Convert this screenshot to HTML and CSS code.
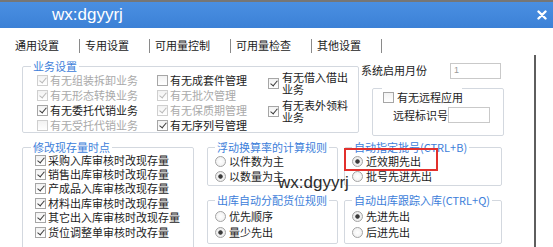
FILE: index.html
```html
<!DOCTYPE html>
<html lang="zh-CN">
<head>
<meta charset="utf-8">
<title>wx:dgyyrj</title>
<link rel="stylesheet" href="styles.css">
</head>
<body>
<div class="window">
  <div class="titlebar">
    <span class="title">wx:dgyyrj</span>
    <svg class="close" width="10" height="10" viewBox="0 0 10 10"><path d="M1.5 1.5 L8.5 8.5 M8.5 1.5 L1.5 8.5" stroke="#fff" stroke-width="2.4" stroke-linecap="round"/></svg>
  </div>
  <div class="tabs">
    <span class="tab first">通用设置</span><span class="sep"></span>
    <span class="tab">专用设置</span><span class="sep"></span>
    <span class="tab">可用量控制</span><span class="sep"></span>
    <span class="tab">可用量检查</span><span class="sep"></span>
    <span class="tab">其他设置</span><span class="sep"></span>
  </div>
  <div class="page">
    <div class="row1">
      <fieldset class="group biz">
        <legend>业务设置</legend>
        <div class="biz-cols">
          <div class="col c1">
            <div class="item dis"><span class="cb dis on"></span>有无组装拆卸业务</div>
            <div class="item dis"><span class="cb dis on"></span>有无形态转换业务</div>
            <div class="item"><span class="cb on"></span>有无委托代销业务</div>
            <div class="item dis"><span class="cb dis"></span>有无受托代销业务</div>
          </div>
          <div class="col c2">
            <div class="item"><span class="cb"></span>有无成套件管理</div>
            <div class="item dis"><span class="cb dis on"></span>有无批次管理</div>
            <div class="item dis"><span class="cb dis on"></span>有无保质期管理</div>
            <div class="item"><span class="cb on"></span>有无序列号管理</div>
          </div>
          <div class="col c3">
            <div class="witem"><span class="cb on"></span><span class="wtext">有无借入借出业务</span></div>
            <div class="witem"><span class="cb on"></span><span class="wtext">有无表外领料业务</span></div>
          </div>
        </div>
      </fieldset>
      <div class="side">
        <div class="month"><span>系统启用月份</span><span class="input month-input">1</span></div>
        <fieldset class="group remote">
          <legend class="gap"></legend>
          <div class="remote-row"><span class="cb"></span><span class="rtext">有无远程应用</span></div>
          <div class="remote-id"><span>远程标识号</span><span class="input id-input"></span></div>
        </fieldset>
      </div>
    </div>
    <div class="row2">
      <fieldset class="group stock">
        <legend>修改现存量时点</legend>
        <div class="item"><span class="cb on"></span>采购入库审核时改现存量</div>
        <div class="item"><span class="cb on"></span>销售出库审核时改现存量</div>
        <div class="item"><span class="cb on"></span>产成品入库审核改现存量</div>
        <div class="item"><span class="cb on"></span>材料出库审核时改现存量</div>
        <div class="item"><span class="cb on"></span>其它出入库审核时改现存量</div>
        <div class="item"><span class="cb on"></span>货位调整单审核时改存量</div>
      </fieldset>
      <div class="rcol mid">
        <fieldset class="group top">
          <legend>浮动换算率的计算规则</legend>
          <div class="ritem"><span class="rb"></span>以件数为主</div>
          <div class="ritem"><span class="rb on"></span>以数量为主</div>
        </fieldset>
        <fieldset class="group bottom">
          <legend>出库自动分配货位规则</legend>
          <div class="ritem"><span class="rb"></span>优先顺序</div>
          <div class="ritem"><span class="rb on"></span>量少先出</div>
        </fieldset>
      </div>
      <div class="rcol right">
        <fieldset class="group top">
          <legend>自动指定批号(CTRL+B)</legend>
          <div class="ritem"><span class="rb on"></span>近效期先出</div>
          <div class="ritem"><span class="rb"></span>批号先进先出</div>
        </fieldset>
        <fieldset class="group bottom">
          <legend>自动出库跟踪入库(CTRL+Q)</legend>
          <div class="ritem"><span class="rb on"></span>先进先出</div>
          <div class="ritem"><span class="rb"></span>后进先出</div>
        </fieldset>
        <span class="highlight"></span>
      </div>
    </div>
    <span class="watermark">wx:dgyyrj</span>
  </div>
</div>
</body>
</html>
```

FILE: styles.css
```css
html, body {
  margin: 0;
  padding: 0;
  background: #ffffff;
}
body {
  width: 553px;
  height: 247px;
  overflow: hidden;
  font-family: "Noto Sans CJK SC", "Noto Sans", sans-serif;
  font-size: 11px;
  color: #1c1c1c;
}
.window {
  width: 553px;
  height: 247px;
  overflow: hidden;
}
.titlebar {
  height: 26px;
  border-top: 2px solid #767676;
  background: linear-gradient(#4a8fe2, #3c81d6);
  display: flex;
  align-items: center;
  justify-content: space-between;
  padding: 0 6px 0 52px;
}
.title {
  font-family: "Liberation Sans", Arial, sans-serif;
  font-size: 17px;
  color: #ffffff;
  line-height: 20px;
}
.close {
  display: block;
}
.tabs {
  height: 27px;
  box-sizing: border-box;
  padding: 8px 0 0 9px;
  display: flex;
  align-items: center;
  line-height: 13px;
}
.tab {
  padding: 0 20px 0 5px;
  color: #1a1a1a;
}
.tab.first {
  padding-left: 6px;
}
.sep {
  width: 1px;
  height: 14px;
  background: #8a8a8a;
}
.page {
  position: relative;
  width: 536px;
  height: 192px;
  box-sizing: border-box;
  border-right: 2px solid #5e5e5e;
  padding: 5px 0 0 22px;
  overflow: hidden;
}
.group {
  margin: 0;
  padding: 0;
  border: 1px solid #d3d8df;
  border-radius: 2px;
  box-sizing: border-box;
  min-width: 0;
}
.group legend {
  margin-left: 7px;
  padding: 0 2px;
  color: #3d80da;
  line-height: 12px;
}
.row1 {
  display: flex;
  align-items: flex-start;
}
.biz {
  width: 337px;
  height: 73px;
}
.biz legend {
  margin-left: 8px;
  line-height: 13px;
}
.biz-cols {
  display: flex;
  padding-left: 14px;
}
.col {
  display: flex;
  flex-direction: column;
}
.c1 { width: 120px; }
.c2 { width: 111px; }
.c3 {
  margin-top: -2px;
  gap: 4px;
}
.item {
  height: 15px;
  line-height: 13px;
  display: flex;
  align-items: center;
  white-space: nowrap;
}
.item.dis {
  color: #a9a9a9;
}
.cb {
  flex: none;
  width: 11px;
  height: 11px;
  box-sizing: border-box;
  border: 1px solid #a6a6a6;
  background: linear-gradient(#f2f2f2, #ffffff);
  position: relative;
  margin-right: 2px;
}
.cb.on::after {
  content: "";
  position: absolute;
  left: 3px;
  top: 0px;
  width: 3px;
  height: 6px;
  border: solid #3a3a3a;
  border-width: 0 1.5px 1.5px 0;
  transform: rotate(40deg);
}
.cb.dis {
  border-color: #cfcfcf;
}
.cb.dis.on::after {
  border-color: #b8b8b8;
}
.witem {
  display: flex;
  align-items: center;
}
.witem .cb {
  margin-right: 3px;
}
.wtext {
  width: 70px;
  line-height: 12px;
}
.side {
  margin-left: 2px;
  display: flex;
  flex-direction: column;
}
.month {
  margin-top: 2px;
  height: 17px;
  line-height: 13px;
  display: flex;
  align-items: center;
}
.input {
  box-sizing: border-box;
  border: 1px solid #c9c9c9;
  background: #ffffff;
  display: block;
}
.month-input {
  margin-left: 23px;
  width: 51px;
  height: 16px;
  font-family: "Liberation Sans", Arial, sans-serif;
  font-size: 9px;
  line-height: 13px;
  color: #9a9a9a;
  padding-left: 3px;
}
.remote {
  margin: 9px 0 0 11px;
  width: 132px;
  height: 48px;
}
.remote legend.gap {
  margin-left: 9px;
  width: 80px;
  height: 0;
  padding: 0;
  line-height: 0;
}
.remote-row {
  height: 16px;
  line-height: 13px;
  display: flex;
  align-items: center;
  padding-left: 10px;
}
.remote-row .cb {
  margin-right: 3px;
}
.remote-id {
  margin-top: 1px;
  height: 18px;
  line-height: 13px;
  display: flex;
  align-items: center;
  padding-left: 20px;
}
.id-input {
  width: 42px;
  height: 16px;
}
.row2 {
  margin-top: 5px;
  display: flex;
  align-items: flex-start;
}
.stock {
  width: 172px;
  height: 130px;
  padding-left: 12px;
}
.stock legend {
  margin-left: -4px;
}
.stock .item {
  height: 14.4px;
}
.rcol {
  display: flex;
  flex-direction: column;
  position: relative;
}
.mid {
  margin-left: 13px;
  width: 131px;
}
.right {
  margin-left: 6px;
  width: 158px;
}
.rcol .top {
  height: 45px;
  padding: 1px 0 0 7px;
}
.rcol .top legend {
  margin-left: 0;
}
.rcol .bottom {
  margin-top: 8px;
  height: 50px;
  padding: 2px 0 0 7px;
}
.rcol .bottom legend {
  margin-left: 0;
}
.ritem {
  height: 15px;
  line-height: 13px;
  display: flex;
  align-items: center;
  white-space: nowrap;
}
.rcol .bottom .ritem {
  height: 16px;
}
.rb {
  flex: none;
  width: 11px;
  height: 11px;
  box-sizing: border-box;
  border-radius: 50%;
  border: 1px solid #a3a3a3;
  background: radial-gradient(circle, #ffffff 0, #ececec 100%);
  margin-right: 3px;
}
.rb.on {
  background: radial-gradient(circle, #3b3b3b 0, #3b3b3b 1.8px, #f2f2f2 2.6px, #e6e6e6 100%);
}
.highlight {
  position: absolute;
  left: 0;
  top: 7px;
  width: 94px;
  height: 23px;
  box-sizing: border-box;
  border: 2px solid #e2302c;
}
.watermark {
  position: absolute;
  left: 278px;
  top: 118px;
  font-family: "Liberation Sans", Arial, sans-serif;
  font-size: 17px;
  line-height: 20px;
  color: #2c2c2c;
}
```
